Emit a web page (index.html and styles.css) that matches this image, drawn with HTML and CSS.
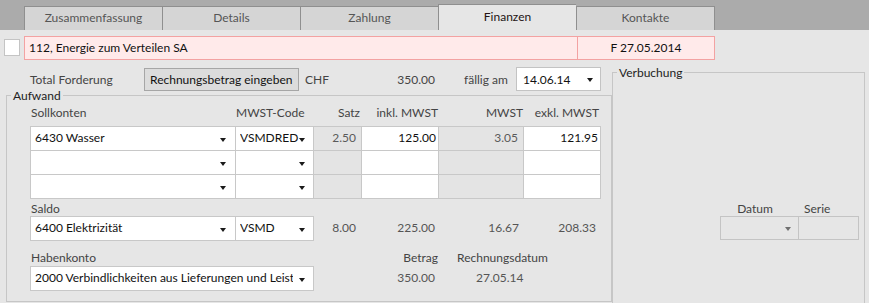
FILE: index.html
```html
<!DOCTYPE html>
<html lang="de">
<head>
<meta charset="utf-8">
<title>Finanzen</title>
<link rel="stylesheet" href="styles.css">
</head>
<body>
<div class="tabbar">
  <div class="tab">Zusammenfassung</div>
  <div class="tab">Details</div>
  <div class="tab">Zahlung</div>
  <div class="tab active">Finanzen</div>
  <div class="tab">Kontakte</div>
</div>

<div class="titlerow">
  <div class="check"></div>
  <div class="titlebox">
    <div class="tname">112, Energie zum Verteilen SA</div>
    <div class="tdate">F 27.05.2014</div>
  </div>
</div>

<div class="main">
  <div class="leftcol">
    <div class="forderung">
      <span class="lbl lbl-total">Total Forderung</span>
      <button class="btn">Rechnungsbetrag eingeben</button>
      <span class="lbl chf">CHF</span>
      <span class="lbl amount">350.00</span>
      <span class="lbl faellig">fällig am</span>
      <div class="datebox"><span>14.06.14</span><i class="arrow"></i></div>
    </div>

    <section class="group aufwand">
      <div class="legend">Aufwand</div>
      <div class="aw-body">
        <div class="hdr">
          <div class="h-soll">Sollkonten</div>
          <div class="h-code">MWST-Code</div>
          <div class="h-satz">Satz</div>
          <div class="h-inkl">inkl. MWST</div>
          <div class="h-mwst">MWST</div>
          <div class="h-exkl">exkl. MWST</div>
        </div>

        <div class="grid">
          <div class="cell"><span class="ctext">6430 Wasser</span><i class="arrow a-soll"></i></div>
          <div class="cell"><span class="ctext">VSMDRED</span><i class="arrow a-code"></i></div>
          <div class="cell ro num">2.50</div>
          <div class="cell num edit">125.00</div>
          <div class="cell ro num">3.05</div>
          <div class="cell num edit">121.95</div>

          <div class="cell"><span class="ctext"></span><i class="arrow a-soll"></i></div>
          <div class="cell"><span class="ctext"></span><i class="arrow a-code"></i></div>
          <div class="cell ro"></div>
          <div class="cell"></div>
          <div class="cell ro"></div>
          <div class="cell"></div>

          <div class="cell"><span class="ctext"></span><i class="arrow a-soll"></i></div>
          <div class="cell"><span class="ctext"></span><i class="arrow a-code"></i></div>
          <div class="cell ro"></div>
          <div class="cell"></div>
          <div class="cell ro"></div>
          <div class="cell"></div>
        </div>

        <div class="sublbl saldo-lbl">Saldo</div>
        <div class="vrow">
          <div class="pair">
            <div class="cell"><span class="ctext">6400 Elektrizität</span><i class="arrow a-soll"></i></div>
            <div class="cell"><span class="ctext">VSMD</span><i class="arrow a-code"></i></div>
          </div>
          <div class="v v-satz">8.00</div>
          <div class="v v-inkl">225.00</div>
          <div class="v v-mwst">16.67</div>
          <div class="v v-exkl">208.33</div>
        </div>

        <div class="hrow">
          <div class="sublbl h-haben">Habenkonto</div>
          <div class="sublbl h-betrag">Betrag</div>
          <div class="sublbl h-rdat">Rechnungsdatum</div>
        </div>
        <div class="vrow">
          <div class="single">
            <div class="cell"><span class="ctext clip">2000 Verbindlichkeiten aus Lieferungen und Leistungen</span><i class="arrow a-code"></i></div>
          </div>
          <div class="v v-satz"></div>
          <div class="v v-betrag">350.00</div>
          <div class="v v-rdat">27.05.14</div>
        </div>
      </div>
    </section>
  </div>

  <section class="group verbuchung">
    <div class="legend">Verbuchung</div>
    <div class="vb-body">
      <div class="dgroup">
        <div class="dlabels">
          <div class="l-datum">Datum</div>
          <div class="l-serie">Serie</div>
        </div>
        <div class="dbox">
          <div class="dcell"><i class="arrow gray"></i></div>
          <div class="dcell"></div>
        </div>
      </div>
    </div>
  </section>
</div>
</body>
</html>
```

FILE: styles.css
```css
* { box-sizing: border-box; }
html, body { margin: 0; padding: 0; }
body {
  width: 869px;
  height: 303px;
  overflow: hidden;
  background: #e6e6e6;
  font-family: Lato, "Open Sans", "Liberation Sans", sans-serif;
  font-size: 12px;
  color: #1c1c1c;
}

/* tabs */
.tabbar {
  height: 30px;
  background: #ababab;
  display: flex;
  align-items: flex-end;
  padding-left: 24px;
}
.tab {
  width: 138px;
  height: 24px;
  background: #d5d5d5;
  border: 1px solid #8f8f8f;
  border-right: none;
  border-bottom: none;
  color: #555;
  text-align: center;
  line-height: 22px;
}
.tab:last-child { width: 139px; border-right: 1px solid #8f8f8f; }
.tab.active {
  height: 26px;
  background: #e6e6e6;
  color: #241414;
  line-height: 23px;
}

/* title row */
.titlerow {
  margin-top: 6px;
  height: 24px;
  display: flex;
}
.check {
  margin: 3px 0 0 4px;
  width: 16px;
  height: 17px;
  background: #fff;
  border: 1px solid #c4c4c4;
}
.titlebox {
  margin-left: 4px;
  width: 691px;
  height: 24px;
  border: 1px solid #f3a2a2;
  background: #ffeaea;
  display: flex;
  line-height: 21px;
  color: #111;
}
.tname { width: 553px; border-right: 1px solid #f3a2a2; padding-left: 4px; }
.tdate { flex: 1; text-align: center; }

/* main */
.main {
  display: flex;
  align-items: flex-start;
  padding-top: 7px;
}
.leftcol { margin-left: 6px; width: 606px; }

.forderung {
  height: 24px;
  display: flex;
  align-items: center;
}
.lbl { color: #444; }
.lbl-total { margin-left: 24px; width: 114px; }
.btn {
  align-self: flex-start;
  margin: 1px 0 0 0;
  width: 155px;
  height: 23px;
  padding: 0 0 0 5px;
  text-align: left;
  background: #dcdcdc;
  border: 1px solid #a6a6a6;
  border-radius: 0;
  font: inherit;
  color: #111;
}
.chf { margin-left: 6px; width: 30px; }
.amount { width: 100px; text-align: right; }
.faellig { margin-left: 29px; width: 52px; }
.datebox {
  width: 85px;
  height: 24px;
  background: #fff;
  border: 1px solid #c3c3c3;
  display: flex;
  align-items: center;
  padding-left: 6px;
  color: #111;
}
.datebox .arrow { margin-left: auto; margin-right: 7px; }

.arrow {
  display: block;
  flex: none;
  width: 0;
  height: 0;
  border-left: 3.5px solid transparent;
  border-right: 3.5px solid transparent;
  border-top: 4px solid #1a1a1a;
  margin-top: 2px;
}
.arrow.gray { border-top-color: #707070; }

/* group boxes */
.group {
  border: 1px solid #c6c6c6;
}
.legend {
  width: max-content;
  margin: -8px 0 0 4px;
  padding: 0 2px;
  line-height: 16px;
  background: #e6e6e6;
  color: #222;
}
.aufwand {
  margin-top: 4px;
  width: 606px;
  height: 207px;
}
.aw-body { padding: 1px 0 0 23px; }

.hdr { display: flex; line-height: 16px; color: #444; margin-bottom: 5px; }
.h-soll { width: 205px; padding-left: 1px; }
.h-code { width: 78px; padding-left: 1px; }
.h-satz { width: 48px; text-align: right; padding-right: 1px; }
.h-inkl { width: 77px; text-align: right; }
.h-mwst { width: 85px; text-align: right; }
.h-exkl { width: 77px; text-align: right; padding-right: 1px; }

.grid {
  display: grid;
  grid-template-columns: 204px 77px 47px 76px 84px 76px;
  grid-auto-rows: 23px;
  gap: 1px;
  padding: 1px;
  width: 571px;
  background: #c8c8c8;
}
.cell {
  background: #fff;
  display: flex;
  align-items: center;
  padding-left: 4px;
  padding-bottom: 2px;
  color: #111;
  line-height: 16px;
}
.ctext { flex: 1; white-space: nowrap; overflow: hidden; }
.a-soll { margin-right: 9px; }
.a-code { margin-right: 8px; }
.cell .arrow { margin-top: 4px; }
.cell.ro { background: #e4e4e4; color: #5a5a5a; }
.cell.num { justify-content: flex-end; padding-right: 5px; }
.cell.num.edit { padding-right: 2px; }

.sublbl { color: #444; line-height: 15px; }
.saldo-lbl { margin-top: 2px; padding-left: 1px; }

.vrow { display: flex; align-items: center; }
.pair, .single {
  display: grid;
  gap: 1px;
  padding: 1px;
  background: #c8c8c8;
  height: 25px;
}
.pair { grid-template-columns: 204px 77px; width: 284px; }
.single { grid-template-columns: 282px; width: 284px; }
.clip { margin-right: 6px; }

.v { color: #555; text-align: right; padding-bottom: 2px; }
.v-satz { width: 48px; padding-right: 6px; }
.v-inkl { width: 77px; padding-right: 4px; }
.v-mwst { width: 85px; padding-right: 5px; }
.v-exkl { width: 77px; padding-right: 5px; }
.v-betrag { width: 77px; padding-right: 4px; }
.v-rdat { padding-left: 37px; }

.hrow { display: flex; margin-top: 9px; margin-bottom: 1px; }
.h-haben { width: 331px; padding-left: 1px; }
.h-betrag { width: 77px; text-align: right; }
.h-rdat { margin-left: 19px; }

/* Verbuchung */
.verbuchung {
  margin-top: 5px;
  width: 253px;
  height: 240px;
}
.vb-body {
  display: flex;
  flex-direction: column;
  align-items: flex-end;
  padding: 120px 5px 0 0;
}
.dgroup { width: 139px; }
.dlabels { display: flex; line-height: 15px; color: #444; }
.l-datum { width: 78px; text-align: center; padding-right: 8px; }
.l-serie { padding-left: 6px; }
.dbox {
  display: grid;
  grid-template-columns: 77px 59px;
  grid-auto-rows: 22px;
  gap: 1px;
  padding: 1px;
  background: #c4c4c4;
  width: 139px;
}
.dcell { background: #e6e6e6; display: flex; align-items: center; justify-content: flex-end; }
.dcell .arrow { margin-right: 7px; }
```
